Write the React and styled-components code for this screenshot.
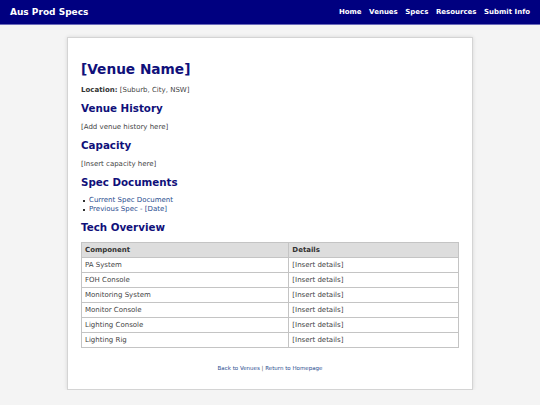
import React from "react";
import styled, { createGlobalStyle } from "styled-components";

const GlobalStyle = createGlobalStyle`
  html, body {
    margin: 0;
    padding: 0;
    background: #f4f4f4;
    font-family: "DejaVu Sans", Verdana, sans-serif;
    color: #333;
  }
`;

const components = [
  "PA System",
  "FOH Console",
  "Monitoring System",
  "Monitor Console",
  "Lighting Console",
  "Lighting Rig",
];

function App() {
  return (
    <>
      <GlobalStyle />
      <Header>
        <Logo>Aus Prod Specs</Logo>
        <Nav>
          <a href="/#">Home</a>
          <a href="/#">Venues</a>
          <a href="/#">Specs</a>
          <a href="/#">Resources</a>
          <a href="/#">Submit Info</a>
        </Nav>
      </Header>
      <Main>
        <Card>
          <Title>[Venue Name]</Title>
          <Text>
            <strong>Location:</strong> [Suburb, City, NSW]
          </Text>
          <SubTitle>Venue History</SubTitle>
          <Text>[Add venue history here]</Text>
          <SubTitle>Capacity</SubTitle>
          <Text>[Insert capacity here]</Text>
          <SubTitle>Spec Documents</SubTitle>
          <DocList>
            <li>
              <a href="/#">Current Spec Document</a>
            </li>
            <li>
              <a href="/#">Previous Spec - [Date]</a>
            </li>
          </DocList>
          <SubTitle>Tech Overview</SubTitle>
          <Table>
            <thead>
              <tr>
                <th>Component</th>
                <th>Details</th>
              </tr>
            </thead>
            <tbody>
              {components.map((c) => (
                <tr key={c}>
                  <td>{c}</td>
                  <td>[Insert details]</td>
                </tr>
              ))}
            </tbody>
          </Table>
          <Footer>
            <a href="/#">Back to Venues</a> | <a href="/#">Return to Homepage</a>
          </Footer>
        </Card>
      </Main>
    </>
  );
}

export default App;

const Header = styled.header`
  height: 24px;
  background: #000080;
  border-bottom: 1px solid #6a6ab8;
  display: flex;
  align-items: center;
  justify-content: space-between;
  padding: 0 10px;
  color: #fff;
`;

const Logo = styled.div`
  font-size: 9px;
  font-weight: bold;
`;

const Nav = styled.nav`
  display: flex;
  gap: 7.5px;

  a {
    color: #fff;
    text-decoration: none;
    font-size: 7px;
    font-weight: bold;
  }
`;

const Main = styled.main`
  display: flex;
  justify-content: center;
  padding-top: 12px;
`;

const Card = styled.div`
  width: 378px;
  background: #fff;
  border: 1px solid #d4d4d4;
  box-shadow: 0 0 4px rgba(0, 0, 0, 0.12);
  padding: 20px 13px 18px;
`;

const Title = styled.h1`
  margin: 0 0 1px;
  font-size: 13.7px;
  color: #10107a;
  line-height: 22px;
`;

const SubTitle = styled.h2`
  margin: 0;
  font-size: 10.3px;
  color: #10107a;
  line-height: 19px;
`;

const Text = styled.p`
  margin: 0;
  font-size: 7px;
  line-height: 18px;
  color: #444;

  strong {
    color: #333;
  }
`;

const DocList = styled.ul`
  margin: 4px 0 4px;
  padding-left: 0;
  list-style: none;
  font-size: 7px;
  line-height: 9px;

  li {
    display: flex;
    align-items: center;
  }

  li::before {
    content: "";
    width: 2px;
    height: 2px;
    background: #333;
    margin: 0 4px 0 2px;
  }

  a {
    color: #2a4d8f;
    text-decoration: none;
  }
`;

const Table = styled.table`
  width: 100%;
  border-collapse: collapse;
  margin-top: 5px;
  font-size: 7px;

  th,
  td {
    border: 1px solid #c4c4c4;
    text-align: left;
    padding: 0 3px;
    height: 14px;
    color: #444;
  }

  th {
    background: #ddd;
    color: #333;
    font-weight: bold;
  }

  td:first-child,
  th:first-child {
    width: 55%;
  }
`;

const Footer = styled.div`
  margin-top: 17px;
  text-align: center;
  font-size: 5.5px;
  color: #555;

  a {
    color: #2a4d8f;
    text-decoration: none;
  }
`;
